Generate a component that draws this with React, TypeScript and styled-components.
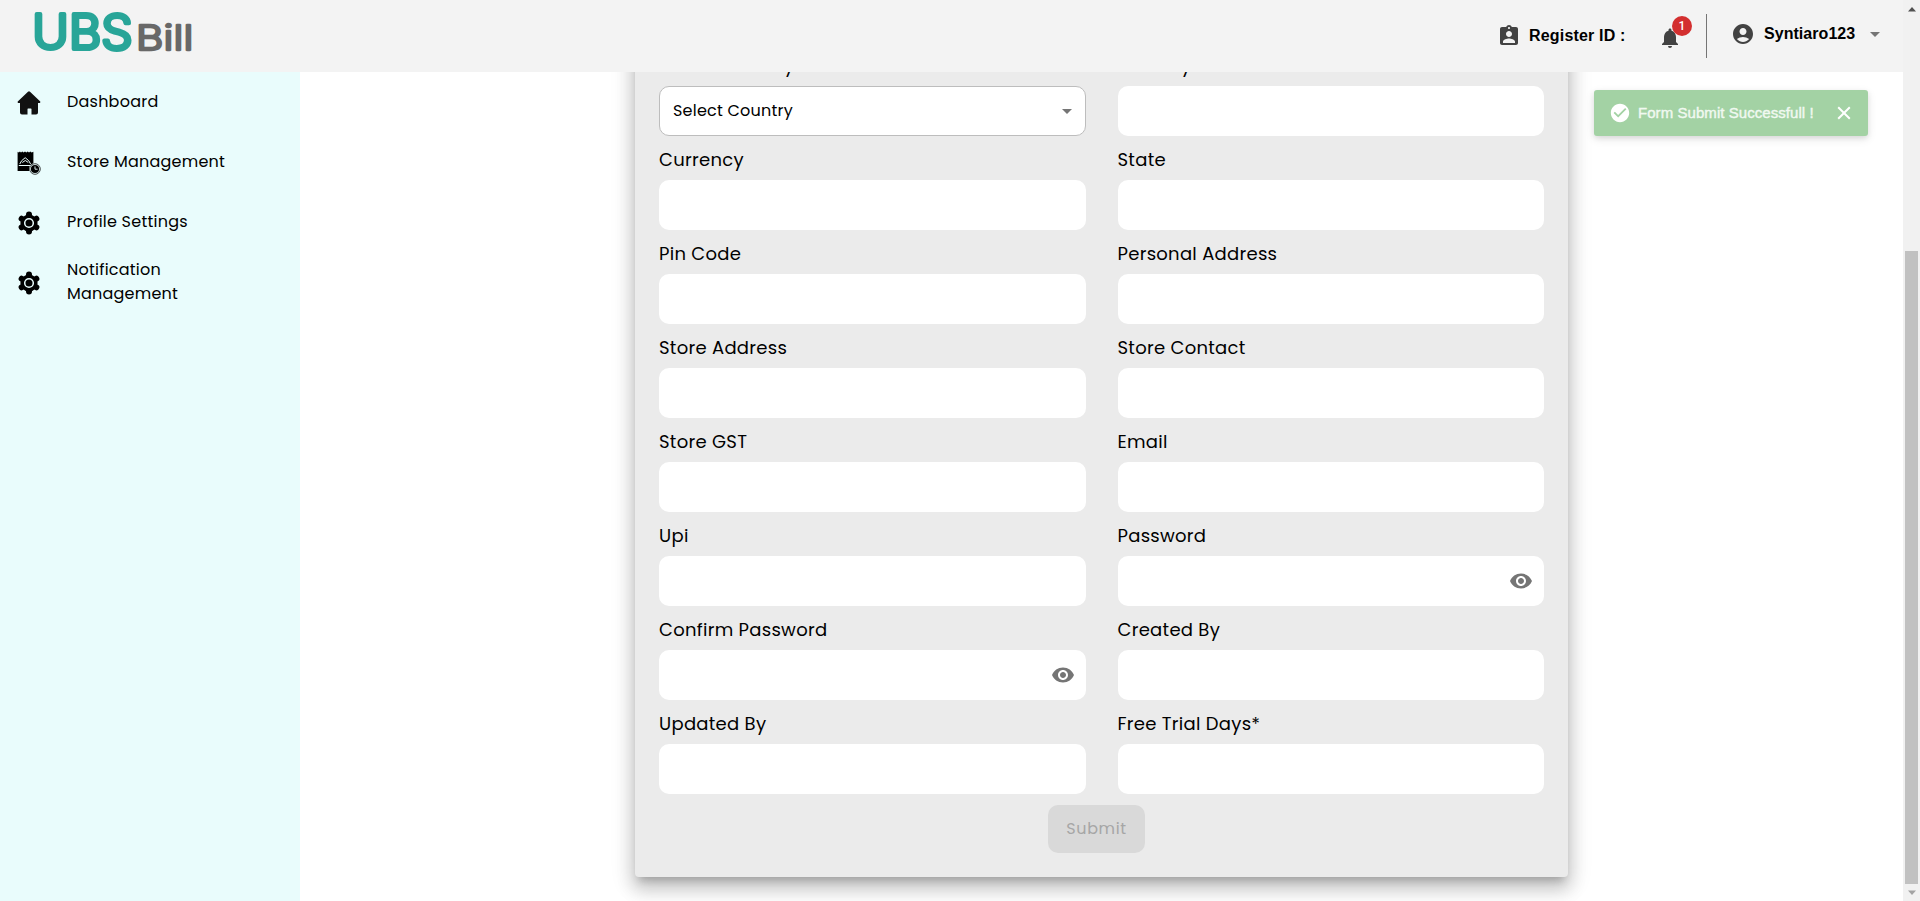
import React from "react";
import styled, { createGlobalStyle } from "styled-components";
import {
  MdAccountCircle,
  MdArrowDropDown,
  MdAssignmentInd,
  MdCheckCircle,
  MdNotifications,
  MdVisibility,
} from "react-icons/md";

const GlobalStyle = createGlobalStyle`
  * { box-sizing: border-box; }
  body {
    margin: 0;
    background: #fff;
    color: #000;
    font-family: Poppins, Inter, "Noto Sans", sans-serif;
    letter-spacing: 0.15px;
    overflow: hidden;
  }
`;

const Screen = styled.div`
  display: flex;
  height: 901px;
`;

const Page = styled.div`
  position: relative;
  flex: 1;
  display: flex;
  flex-direction: column;
  min-width: 0;
`;

const Header = styled.header`
  display: flex;
  justify-content: space-between;
  flex: 0 0 72px;
  padding: 0 16px 0 32px;
  background: #f3f3f3;
`;

const HeaderTools = styled.div`
  display: flex;
  align-items: flex-start;
  color: #424242;
  font-family: Arial, "Liberation Sans", sans-serif;
  font-weight: 700;
  font-size: 16px;
  line-height: 24px;
`;

const HeaderText = styled.span`
  color: #000;
  white-space: nowrap;
  letter-spacing: 0.18px;
`;

const Register = styled.div`
  display: flex;
  gap: 8px;
  width: 161px;
  padding-top: 24px;
`;

const Bell = styled.div`
  position: relative;
  width: 48px;
  padding-top: 26px;
`;

const Badge = styled.span`
  position: absolute;
  top: 16px;
  left: 14px;
  width: 20px;
  height: 20px;
  border-radius: 50%;
  background: #d32f2f;
  color: #fff;
  font: 500 12px/20px Roboto, sans-serif;
  letter-spacing: 0;
  text-align: center;
`;

const Divider = styled.div`
  width: 1px;
  height: 44px;
  margin: 14px 24px 0 0;
  background: #757575;
`;

const Account = styled.div`
  display: flex;
  padding-top: 22px;

  ${HeaderText} {
    width: 92px;
    margin: 0 7px 0 9px;
    letter-spacing: 0.05px;
  }
`;

const Body = styled.div`
  display: flex;
  flex: 1;
  min-height: 0;
`;

const Sidebar = styled.nav`
  width: 300px;
  background: #e9fcfc;
`;

const NavItem = styled.a`
  display: flex;
  align-items: center;
  gap: 26.4px;
  height: 60px;
  padding-left: 16.6px;

  svg {
    flex: none;
    margin-top: 1px;
  }
`;

const NavText = styled.span`
  font-size: 16px;
  line-height: 24px;
  letter-spacing: 0.23px;
  white-space: pre-line;
`;

const Content = styled.main`
  display: flex;
  flex: 1;
  flex-direction: column;
  justify-content: flex-end;
  align-items: flex-start;
  overflow: hidden;
  padding: 0 0 24px 335px;
`;

const Card = styled.form`
  display: flex;
  flex: none;
  flex-direction: column;
  align-items: center;
  gap: 11px;
  width: 933px;
  padding: 24px;
  border-radius: 4px;
  background: #ebebeb;
  box-shadow: 0 7px 8px -4px rgba(0, 0, 0, 0.2), 0 12px 17px 2px rgba(0, 0, 0, 0.14),
    0 5px 22px 4px rgba(0, 0, 0, 0.12);
`;

const Fields = styled.div`
  display: grid;
  grid-template-columns: 1fr 1fr;
  column-gap: 32px;
  width: 100%;
`;

const Field = styled.div`
  display: flex;
  flex-direction: column;
`;

const Label = styled.label`
  height: 44px;
  font-size: 18px;
  line-height: 48px;
  letter-spacing: 0.28px;
`;

const Box = styled.div<{ $outlined?: boolean }>`
  display: flex;
  align-items: center;
  justify-content: ${(p) => (p.$outlined ? "space-between" : "flex-end")};
  height: 50px;
  padding: ${(p) => (p.$outlined ? "0 6px 0 13px" : "0 11px")};
  border: ${(p) => (p.$outlined ? "1px solid #bdbdbd" : "0")};
  border-radius: 10px;
  background: #fff;
  color: #757575;
`;

const SelectText = styled.span`
  padding-bottom: 2px;
  color: #000;
  font-size: 16px;
  letter-spacing: 0.22px;
`;

const Submit = styled.button`
  width: 97px;
  height: 48px;
  margin-right: 10px;
  padding: 0 0 2px;
  border: 0;
  border-radius: 10px;
  background: #d9d9d9;
  color: #a6a6a6;
  font-family: inherit;
  font-size: 16px;
  letter-spacing: 0.6px;
`;

const Toast = styled.div`
  position: absolute;
  top: 90px;
  right: 35px;
  display: flex;
  align-items: center;
  width: 274px;
  height: 46px;
  padding: 0 14px 0 15px;
  border-radius: 3px;
  background: #a3d2a4;
  color: #fff;
  box-shadow: 0 3px 10px rgba(0, 0, 0, 0.1), 0 2px 5px rgba(0, 0, 0, 0.08);
  font: 15px/20px Arial, "Liberation Sans", sans-serif;
`;

const ToastText = styled.span`
  flex: 1;
  margin: -1px 0 0 7px;
  color: #f1f9f1;
  letter-spacing: 0.06px;
  white-space: nowrap;
  -webkit-text-stroke: 0.4px #f1f9f1;
`;

const Scrollbar = styled.div`
  display: flex;
  flex-direction: column;
  align-items: center;
  width: 17px;
  padding-top: 7px;
  background: #f1f1f1;
`;

const Thumb = styled.div`
  width: 13px;
  height: 633px;
  margin: 239px 0 6px;
  background: #c1c1c1;
`;

const Logo = () => (
  <svg width="170" height="60" viewBox="0 0 170 60" fontFamily="Inter, sans-serif" fontWeight="300" strokeLinejoin="round" strokeLinecap="round">
    <text x="0.300" y="49.300" fontSize="47.400" textLength="100.500" lengthAdjust="spacingAndGlyphs" fill="#28a598" stroke="#28a598" strokeWidth="4">UBS</text>
    <text x="104" y="49.800" fontSize="34.500" textLength="57.500" lengthAdjust="spacingAndGlyphs" fill="#686868" stroke="#686868" strokeWidth="2.300">Bill</text>
  </svg>
);

const HomeIcon = () => (
  <svg width="24" height="24" viewBox="0 0 24 24" fill="#111">
    <path d="M11 .7q1-.9 2 0L23 10.300q.7.800.2 1.200-.3.500-1.200.500h-1v9.500q0 2-2 2h-4.500V18q0-.6-.6-.6h-2.800q-.6 0-.6.600v5.500H5q-2 0-2-2V12H1.800q-.8 0-1.100-.5-.4-.5.3-1.200z" />
  </svg>
);

const StoreIcon = () => (
  <svg width="24" height="24" viewBox="0 0 24 24">
    <path d="M.6.8 1.800 1.600 2.900.6 4 1.600 5.300.6 6.600 1.600 8 .6 9.300 1.600 10.700.6 12 1.600 13.300.6 14.600 1.600 16.400.8V20H.6z" />
    <path d="M2.800 13q1-3.400 5.400-6.300 4.400 2.900 5.400 6.300M1.800 14.500h13M5.300 11.500l3-2 3 2" fill="none" stroke="#e9fcfc" strokeWidth="1" />
    <circle cx="18" cy="18" r="6" fill="#e9fcfc" />
    <circle cx="18" cy="18" r="5.300" fill="none" stroke="#000" strokeWidth=".7" />
    <circle cx="18" cy="18" r="4.100" />
    <path d="M18 15.400V18.200H20.600" fill="none" stroke="#e9fcfc" strokeWidth=".9" />
  </svg>
);

const GearIcon = () => (
  <svg width="24" height="24" viewBox="0 0 24 24">
    <circle cx="12" cy="12" r="8.600" />
    {[0, 60, 120, 180, 240, 300].map((angle) => (
      <circle key={angle} cx="12" cy="3.500" r="3" transform={`rotate(${angle} 12 12)`} />
    ))}
    <circle cx="12" cy="12" r="4.300" fill="#000" stroke="#e9fcfc" strokeWidth="1.500" />
  </svg>
);

const CloseIcon = () => (
  <svg width="20" height="20" viewBox="0 0 20 20">
    <path d="M4.200 4.200 15.800 15.800M15.800 4.200 4.200 15.800" stroke="#fff" strokeWidth="2" />
  </svg>
);

const navItems = [
  { text: "Dashboard", icon: <HomeIcon /> },
  { text: "Store Management", icon: <StoreIcon /> },
  { text: "Profile Settings", icon: <GearIcon /> },
  { text: "Notification\nManagement", icon: <GearIcon /> },
];

type FieldSpec = { label: string; kind?: "select" | "password" };

const fields: FieldSpec[] = [
  { label: "Select Country", kind: "select" },
  { label: "Country Code" },
  { label: "Currency" },
  { label: "State" },
  { label: "Pin Code" },
  { label: "Personal Address" },
  { label: "Store Address" },
  { label: "Store Contact" },
  { label: "Store GST" },
  { label: "Email" },
  { label: "Upi" },
  { label: "Password", kind: "password" },
  { label: "Confirm Password", kind: "password" },
  { label: "Created By" },
  { label: "Updated By" },
  { label: "Free Trial Days*" },
];

export default function App() {
  return (
    <Screen>
      <GlobalStyle />
      <Page>
        <Header>
          <Logo />
          <HeaderTools>
            <Register>
              <MdAssignmentInd size={24} />
              <HeaderText>Register ID :</HeaderText>
            </Register>
            <Bell>
              <MdNotifications size={24} />
              <Badge>1</Badge>
            </Bell>
            <Divider />
            <Account>
              <MdAccountCircle size={24} />
              <HeaderText>Syntiaro123</HeaderText>
              <MdArrowDropDown size={24} color="#757575" />
            </Account>
          </HeaderTools>
        </Header>
        <Body>
          <Sidebar>
            {navItems.map((item) => (
              <NavItem key={item.text}>
                {item.icon}
                <NavText>{item.text}</NavText>
              </NavItem>
            ))}
          </Sidebar>
          <Content>
            <Card>
              <Fields>
                {fields.map((field) => (
                  <Field key={field.label}>
                    <Label>{field.label}</Label>
                    <Box $outlined={field.kind === "select"}>
                      {field.kind === "select" && (
                        <>
                          <SelectText>Select Country</SelectText>
                          <MdArrowDropDown size={24} />
                        </>
                      )}
                      {field.kind === "password" && <MdVisibility size={24} />}
                    </Box>
                  </Field>
                ))}
              </Fields>
              <Submit type="button" disabled>Submit</Submit>
            </Card>
          </Content>
        </Body>
        <Toast>
          <MdCheckCircle size={22} />
          <ToastText>Form Submit Successfull !</ToastText>
          <CloseIcon />
        </Toast>
      </Page>
      <Scrollbar>
        <svg width="8" height="5" viewBox="0 0 8 5"><path d="M0 4.500 4 0 8 4.500z" fill="#505050" /></svg>
        <Thumb />
        <svg width="8" height="5" viewBox="0 0 8 5"><path d="M0 .5 4 5 8 .5z" fill="#a3a3a3" /></svg>
      </Scrollbar>
    </Screen>
  );
}
